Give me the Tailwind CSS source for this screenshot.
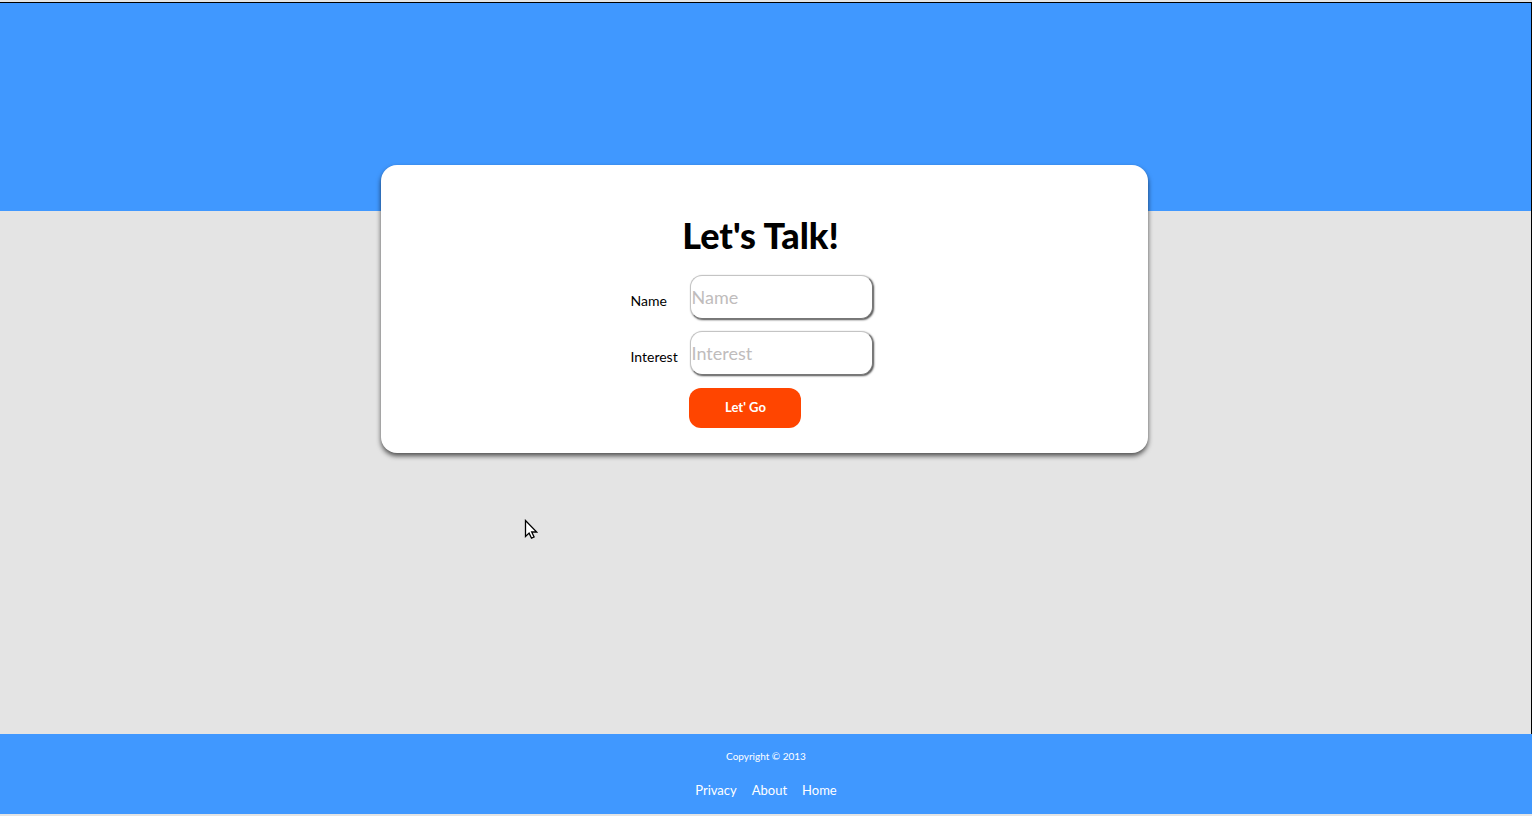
<!DOCTYPE html>
<html lang="en">
<head>
<meta charset="utf-8">
<title>Let's Talk!</title>
<script src="https://cdn.jsdelivr.net/npm/@tailwindcss/browser@4"></script>
</head>
<body class="flex min-h-screen flex-col bg-[#e4e4e4] py-0.5 font-['Lato',sans-serif] text-black">
  <div class="flex grow flex-col border-t border-r border-black">
    <header class="h-52 bg-[#4098ff]"></header>
    <main class="flex grow flex-col items-center">
      <section class="-mt-[46px] mr-0.5 w-[50.1%] rounded-2xl bg-white pt-10 pb-[25px] shadow-[0_3px_5px_rgba(0,0,0,0.65)]">
        <h1 class="mr-2 text-center text-4xl leading-[60px] font-black">Let's Talk!</h1>
        <form class="mx-auto mt-2.5 grid w-[268px] grid-cols-[60px_183px]">
          <label for="name" class="pt-4 text-sm leading-5">Name</label>
          <input id="name" type="text" placeholder="Name" class="mb-3 h-11 rounded-xl border border-t-[#c4c4c4] border-r-[#777] border-b-[#777] border-l-[#c4c4c4] bg-white text-lg shadow-[1px_1px_2px_rgba(0,0,0,0.7)] outline-none placeholder:text-[#c0bcbc]">
          <label for="interest" class="pt-4 text-sm leading-5">Interest</label>
          <input id="interest" type="text" placeholder="Interest" class="mb-[13px] h-11 rounded-xl border border-t-[#c4c4c4] border-r-[#777] border-b-[#777] border-l-[#c4c4c4] bg-white text-lg shadow-[1px_1px_2px_rgba(0,0,0,0.7)] outline-none placeholder:text-[#c0bcbc]">
          <button type="submit" class="col-start-2 -ml-px h-10 w-28 rounded-xl bg-[#ff4500] text-[13px] font-bold text-white">Let' Go</button>
        </form>
      </section>
    </main>
  </div>
  <footer class="flex h-20 flex-col items-center gap-3 bg-[#4098ff] pt-3 text-white">
    <p class="text-[10px] leading-5">Copyright © 2013</p>
    <nav class="flex gap-[15px] text-[13px] leading-6">
      <a href="#privacy">Privacy</a>
      <a href="#about">About</a>
      <a href="#home">Home</a>
    </nav>
  </footer>
  <svg class="pointer-events-none absolute top-[519px] left-[524px]" width="14" height="21" viewBox="0 0 14 21" aria-hidden="true">
    <path d="M1.5 1.5v16l3.6-3.4 2.4 5.1 2.6-1.2-2.4-5h5z" fill="#fff" stroke="#000" stroke-width="1.3"/>
  </svg>
</body>
</html>
